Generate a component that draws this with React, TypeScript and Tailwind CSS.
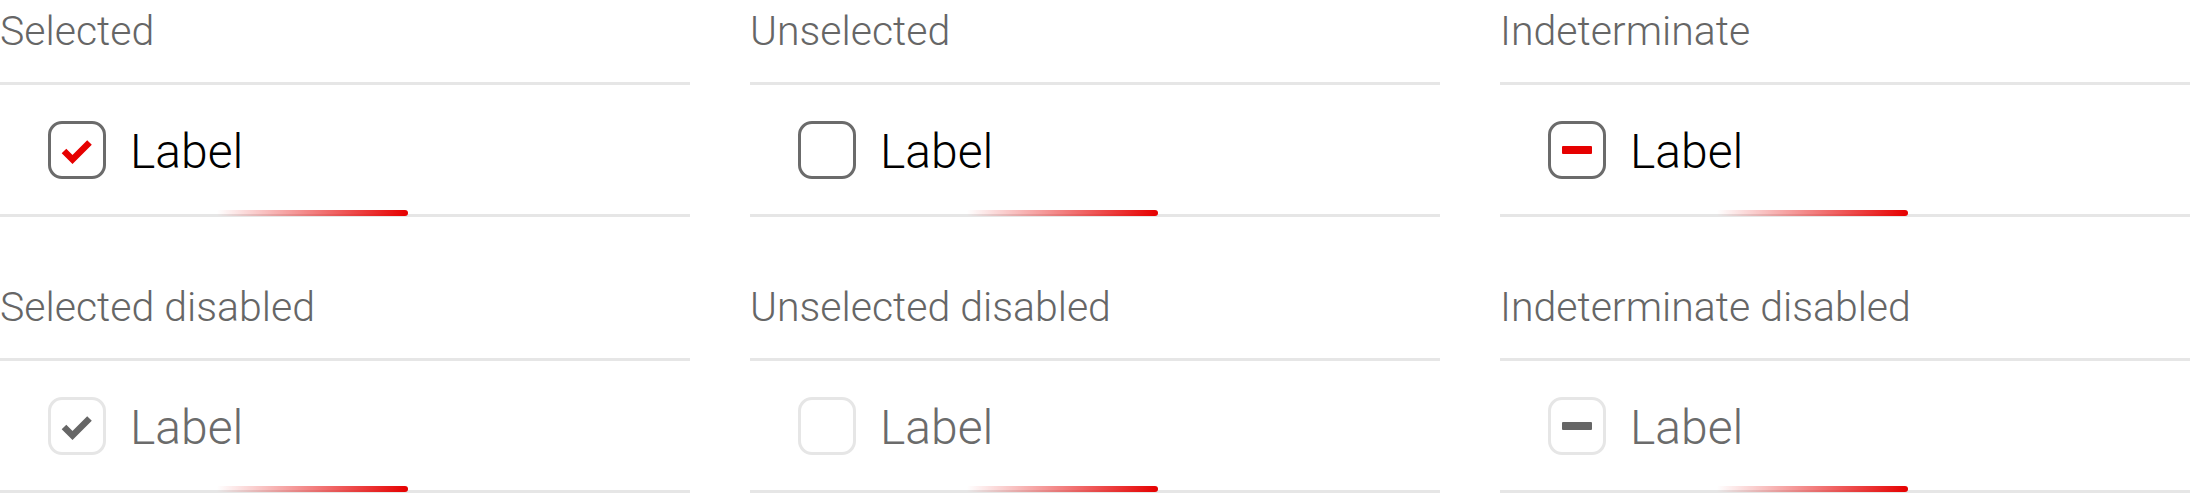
import React from "react";

type CheckState = "checked" | "unchecked" | "indeterminate";

const columns: { title: string; state: CheckState }[] = [
  { title: "Selected", state: "checked" },
  { title: "Unselected", state: "unchecked" },
  { title: "Indeterminate", state: "indeterminate" },
];

function Checkbox({ state, disabled }: { state: CheckState; disabled?: boolean }) {
  const mark = disabled ? "#666666" : "#e60000";
  return (
    <div
      className={
        "flex h-[58px] w-[58px] shrink-0 items-center justify-center rounded-[14px] border-[3px] " +
        (disabled ? "border-[#e6e6e6]" : "border-[#6b6b6b]")
      }
    >
      {state === "checked" && (
        <svg width="52" height="52" viewBox="3 3 52 52">
          <polyline points="16,30 24.5,38.5 41.5,21.5" fill="none" stroke={mark} strokeWidth="6.5" />
        </svg>
      )}
      {state === "indeterminate" && (
        <div className="h-[8px] w-[30px] rounded-[1px]" style={{ backgroundColor: mark }} />
      )}
    </div>
  );
}

function Section({ title, state, disabled }: { title: string; state: CheckState; disabled?: boolean }) {
  return (
    <div>
      <div className="h-[85px] border-b-[3px] border-[#e6e6e6] pt-[11px] text-[41px] leading-none font-light text-[#666666]">
        {title}
      </div>
      <div className="relative flex h-[132px] items-center gap-[24px] border-b-[3px] border-[#e6e6e6] pl-[48px]">
        <Checkbox state={state} disabled={disabled} />
        <span
          className={
            "pt-[4px] text-[48px] leading-none font-light " + (disabled ? "text-[#6b6b6b]" : "text-black")
          }
        >
          Label
        </span>
        <span className="absolute bottom-[-2px] left-[217px] h-[6px] w-[191px] rounded-r-[3px] bg-linear-to-r from-[#e60000]/0 to-[#e60000]" />
      </div>
    </div>
  );
}

export default function App() {
  return (
    <div className="flex h-[494px] w-[2190px] flex-col gap-[59px] overflow-hidden bg-white font-['Roboto','Liberation_Sans',sans-serif]">
      <div className="grid grid-cols-3 gap-x-[60px]">
        {columns.map((c) => (
          <Section key={c.title} title={c.title} state={c.state} />
        ))}
      </div>
      <div className="grid grid-cols-3 gap-x-[60px]">
        {columns.map((c) => (
          <Section key={c.title} title={c.title + " disabled"} state={c.state} disabled />
        ))}
      </div>
    </div>
  );
}
